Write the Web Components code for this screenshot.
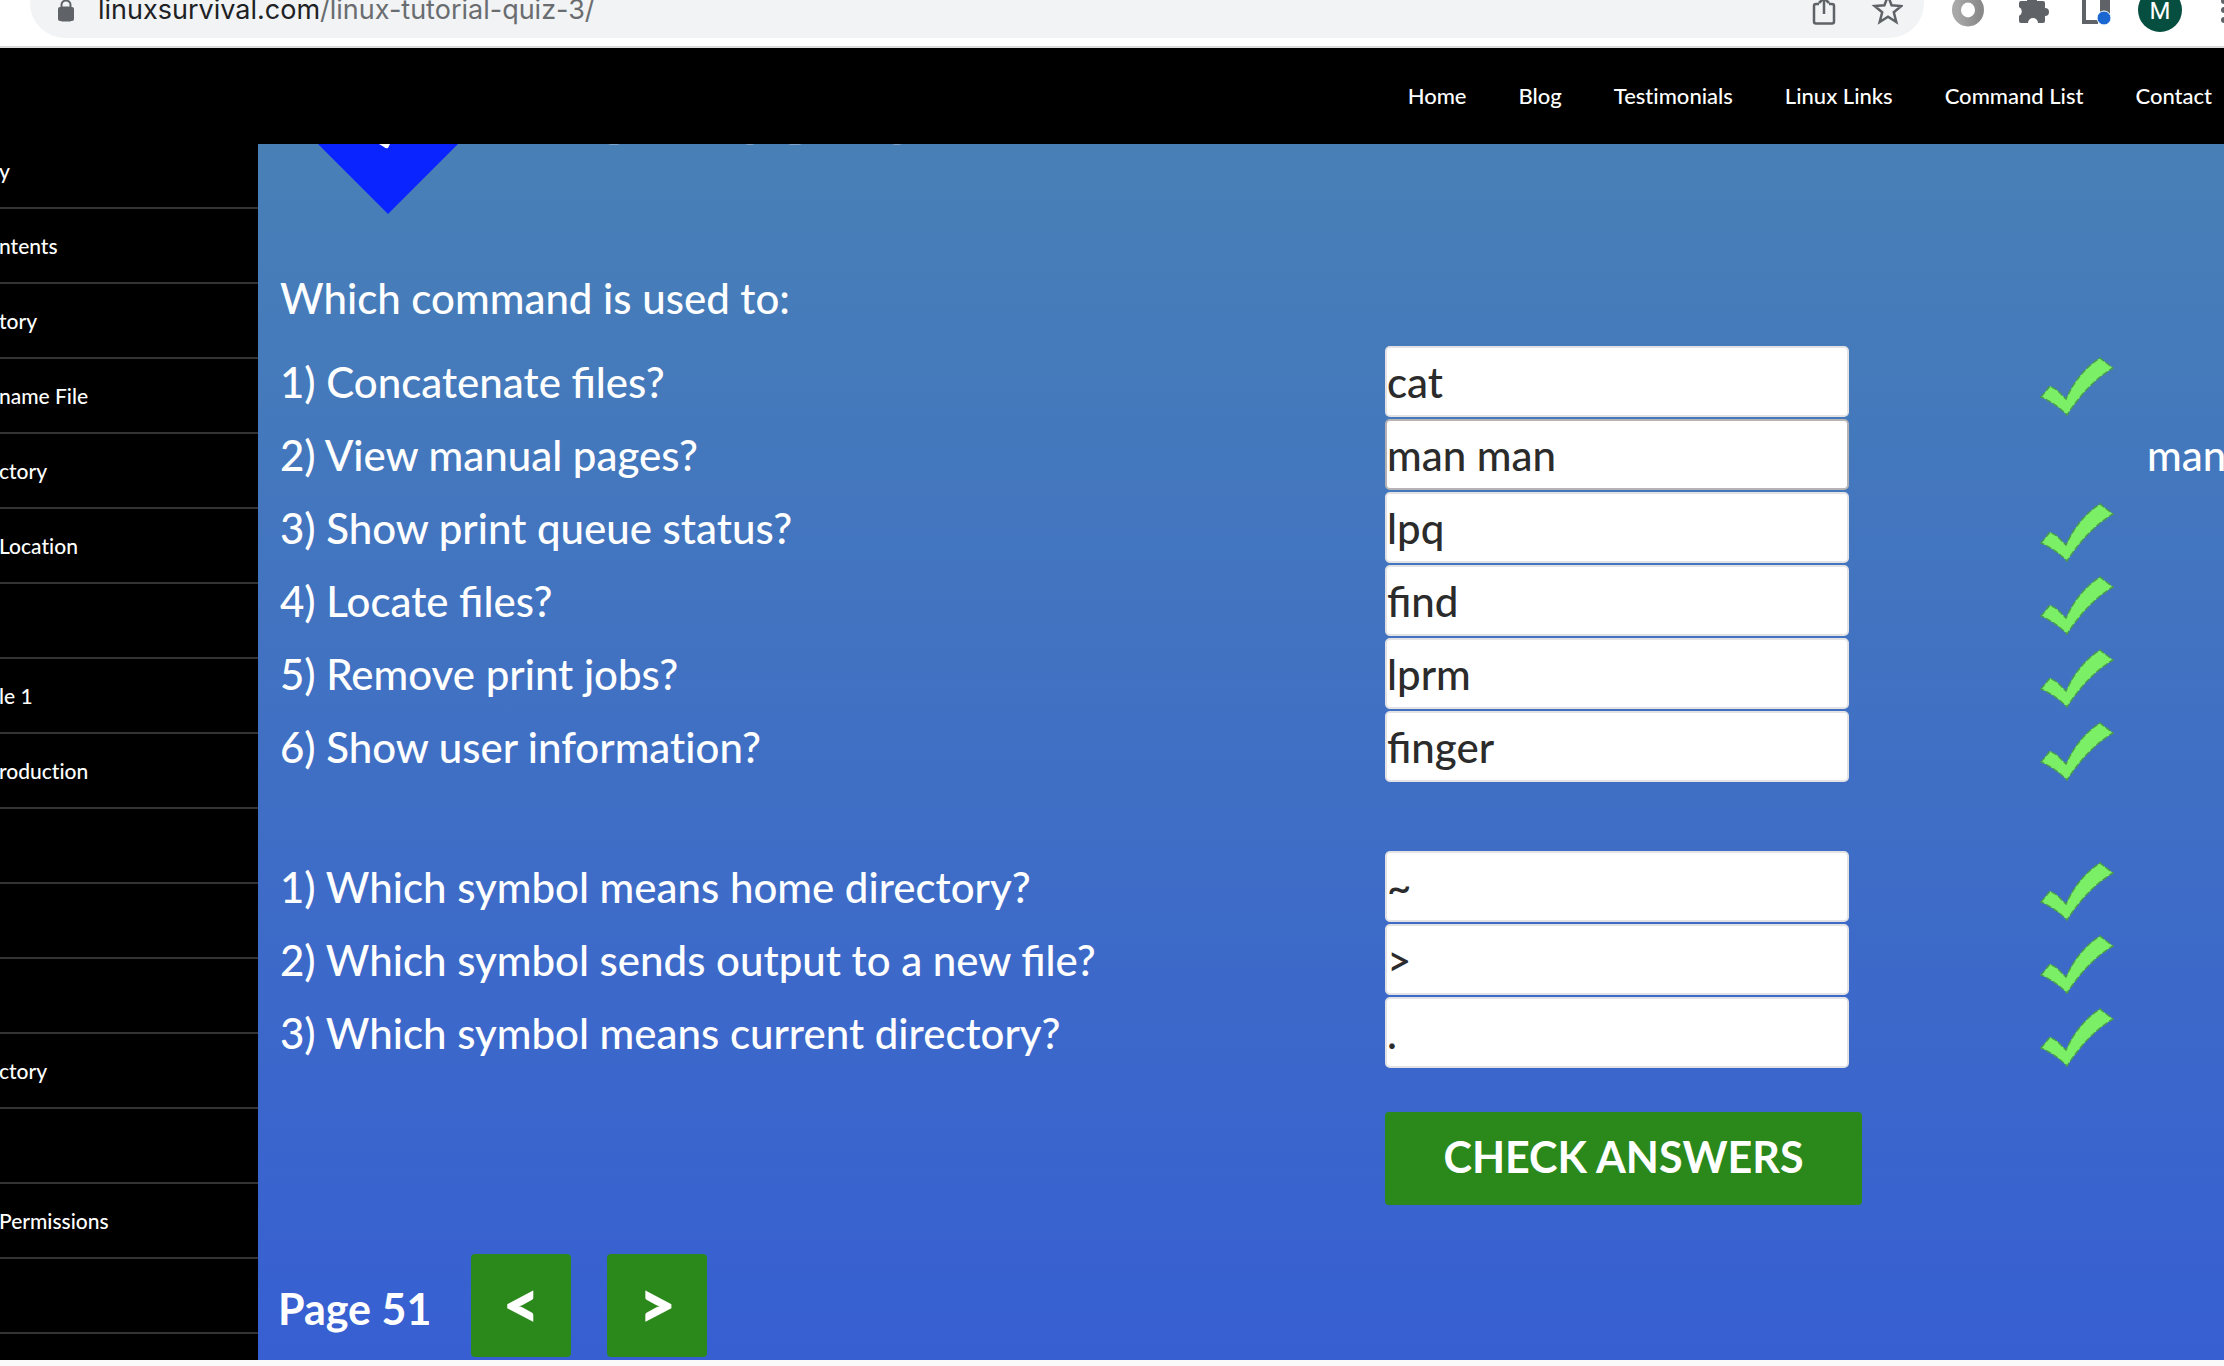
<!DOCTYPE html>
<html lang="en">
<head>
<meta charset="utf-8">
<title>Linux Tutorial Quiz 3</title>
<style>
html,body{margin:0;height:100%}
body{font-family:Lato,"Liberation Sans",sans-serif;font-weight:500;background:#fafafa;overflow:hidden}
</style>
</head>
<body>
<quiz-app></quiz-app>
<script>
const define=(name,html)=>customElements.define(name,class extends HTMLElement{
  connectedCallback(){
    if(this.shadowRoot)return;
    const root=this.attachShadow({mode:'open'});
    root.innerHTML=typeof html==='function'?html(this):html;
  }
});

define('browser-bar',`<style>
:host{display:flex;height:46px;background:#fff;border-bottom:2px solid #dadcdc;padding-left:30px;overflow:hidden;box-sizing:content-box}
.pill{flex:1;box-sizing:border-box;height:70px;margin-top:-32px;padding:32px 21px 0 26px;border-radius:35px;background:#f1f3f4;display:flex;align-items:flex-start}
.url{flex:1;margin-left:22px;font:400 27px/32px Inter,sans-serif;color:#6a6d70;margin-top:-6px}
.url b{font-weight:400;color:#202124}
svg{display:block;flex:none}
.tools{flex:none;width:300px;height:46px}
.av{font:24px Roboto,sans-serif}
</style>
<div class="pill">
<svg width="20" height="24" viewBox="0 0 20 24"><rect x="4" y="7" width="12" height="14" rx="2" fill="#5f6368" stroke="#5f6368" stroke-width="1"/><path d="M5.500 8V5a4.500 4.500 0 0 1 9 0v3" fill="none" stroke="#5f6368" stroke-width="2"/><rect x="2" y="7" width="16" height="14" rx="2" fill="#5f6368"/></svg>
<span class="url"><b>linuxsurvival.com</b>/linux-tutorial-quiz-3/</span>
<svg width="92" height="28" viewBox="0 0 92 28" fill="none" stroke="#5f6368" stroke-width="2.500"><path d="M8 4H5a2 2 0 0 0-2 2v15.500a2 2 0 0 0 2 2h16a2 2 0 0 0 2-2V6a2 2 0 0 0-2-2h-3M13 14V-4M8 3l5-5 5 5"/><path d="M77-4l3.600 9.200 9.800.8-7.600 6.300 2.500 9.700-8.300-5.300-8.300 5.300 2.500-9.700-7.600-6.300 9.800-.8z"/></svg>
</div>
<svg class="tools" viewBox="0 0 300 46"><defs><linearGradient id="g" x1="0" x2="1"><stop offset="0" stop-color="#a8a8a8"/><stop offset="1" stop-color="#8a8a8a"/></linearGradient></defs>
<ellipse cx="44" cy="10" rx="11.500" ry="12" fill="none" stroke="url(#g)" stroke-width="9"/>
<path d="M95 3a2 2 0 0 1 2-2h6a5 5 0 0 1 10 0h6a2 2 0 0 1 2 2v5a4 4 0 0 1 0 8v5a2 2 0 0 1-2 2h-5a5 5 0 0 0-10 0h-7a2 2 0 0 1-2-2v-5a5 5 0 0 0 0-9z" fill="#5f6368"/>
<path d="M158 0h4v20h12v4h-16zM176 0h10v14h-10z" fill="#5f6368"/><circle cx="180" cy="18" r="7" fill="#1a67d2" stroke="#fff" stroke-width="1"/>
<circle cx="236" cy="10" r="22" fill="#064f40"/><text class="av" x="236" y="19" fill="#fff" text-anchor="middle">M</text>
<circle cx="300" cy="1" r="3" fill="#5f6368"/><circle cx="300" cy="10" r="3" fill="#5f6368"/><circle cx="300" cy="20" r="3" fill="#5f6368"/></svg>`);

define('site-nav',`<style>
:host{display:flex;justify-content:flex-end;align-items:center;gap:52px;height:96px;background:#000;padding-right:12px;font-variant-ligatures:none}
a{color:#fff;text-decoration:none;font-size:22px;line-height:32px;white-space:nowrap}
</style>
${['Home','Blog','Testimonials','Linux Links','Command List','Contact'].map(t=>`<a href="#">${t}</a>`).join('')}`);

define('side-menu',`<style>
:host{display:flex;flex-direction:column;justify-content:flex-end;background:#000;overflow:hidden;min-height:0;font-variant-ligatures:none}
ul{list-style:none;margin:0;padding:0}
li{height:73px;border-bottom:2px solid #333;display:flex;align-items:center}
li:last-child{height:26px;border:0}
a{color:#fff;text-decoration:none;font-size:21px;line-height:30px;white-space:nowrap;margin-left:-1px}
</style><ul>
${['y','ntents','tory','name File','ctory','Location','','le 1','roduction','','','','ctory','','Permissions','',''].map(t=>`<li>${t?`<a href="#">${t}</a>`:''}</li>`).join('')}</ul>`);

define('result-mark',`<style>:host{display:block;padding-top:10px}svg{display:block}</style>
<svg width="74" height="60" viewBox="0 0 74 60" role="img" aria-label="Correct"><path d="M1 40L10 29 17 33 26 42Q38 15 60 1L73 11Q48 26 27 58 15 46 1 40Z" fill="#7bef65" stroke="#4a9a4e" stroke-width="1.500" stroke-dasharray="6 2"/></svg>`);

define('quiz-row',el=>{
const m=el.getAttribute('miss');
return `<style>
:host{display:grid;grid-template-columns:minmax(0,1105fr) minmax(0,655fr) minmax(0,107fr) minmax(0,77fr);height:73px;align-items:center;color:#fff;font-size:42px;line-height:52px;white-space:nowrap}
:host([plain]){font-variant-ligatures:none}
input{box-sizing:border-box;width:464px;height:71px;border:2px solid #e3e3e5;border-radius:5px;padding:0;margin:0;background:#fff;color:#2b2b2b;font:inherit;outline:0;font-variant-ligatures:normal}
input.miss{border-color:#b5b3b3}
</style>
<label for="a"><slot></slot></label><input id="a" type="text" value="${el.getAttribute('answer')}" class="${m?'miss':''}">
${m?`<span></span><span>${m}</span>`:'<result-mark></result-mark>'}`});

define('green-button',`<style>:host{display:block}
button{width:100%;height:100%;border:0;border-radius:4px;background:#2b891b;color:#fff;font:inherit;padding:0 0 4px;display:block}
</style><button type="button"><slot></slot></button>`);

define('quiz-app',`<style>
:host{display:grid;grid-template:auto auto 1fr/258px 1fr;height:calc(100vh - 6px);overflow:hidden}
browser-bar,site-nav{grid-column:1/-1}
main{background:linear-gradient(#4880b6,#375fd2);padding-left:22px;overflow:hidden;min-height:0;min-width:0;color:#fff;font-size:42px;line-height:52px}
.logo{display:block;margin-left:38px}
h2{font:inherit;margin:58px 0 0;height:73px}
.gap{height:67px}
.check{display:grid;grid-template-columns:minmax(0,1105fr) minmax(0,839fr);margin-top:43px}
.check green-button{grid-column:2;width:477px;height:93px;font-size:43px;font-weight:700}
.pager{display:flex;align-items:center;margin:49px 0 0 -2px;gap:36px;font-weight:700}
.pager green-button{width:100px;height:103px;font-size:64px;font-weight:800}
.pager span{font-size:43px;margin-right:4px;padding-top:6px}
</style>
<browser-bar></browser-bar><site-nav></site-nav><side-menu></side-menu>
<main>
<svg class="logo" width="600" height="70" viewBox="0 0 600 70" aria-hidden="true"><path d="M0 0H140L70 70Z" fill="#0a24ff"/><path d="M61 0h11l-2 4q-2 1-4-1z" fill="#fff"/><path d="M290 0h12l-3 1h-6zM427 0h10l-3 1h-4zM470 0h14l-3 1h-8zM574 0h10l-3 1h-4z" fill="#7ea3cc"/></svg>
<h2>Which command is used to:</h2>
<quiz-row answer="cat">1) Concatenate files?</quiz-row>
<quiz-row answer="man man" miss="man">2) View manual pages?</quiz-row>
<quiz-row answer="lpq">3) Show print queue status?</quiz-row>
<quiz-row answer="find">4) Locate files?</quiz-row>
<quiz-row answer="lprm">5) Remove print jobs?</quiz-row>
<quiz-row plain answer="finger">6) Show user information?</quiz-row>
<div class="gap"></div>
<quiz-row answer="~">1) Which symbol means home directory?</quiz-row>
<quiz-row answer="&gt;">2) Which symbol sends output to a new file?</quiz-row>
<quiz-row answer=".">3) Which symbol means current directory?</quiz-row>
<div class="check"><green-button>CHECK ANSWERS</green-button></div>
<div class="pager"><span>Page 51</span><green-button>&lt;</green-button><green-button>&gt;</green-button></div>
</main>`);
</script>
</body>
</html>
